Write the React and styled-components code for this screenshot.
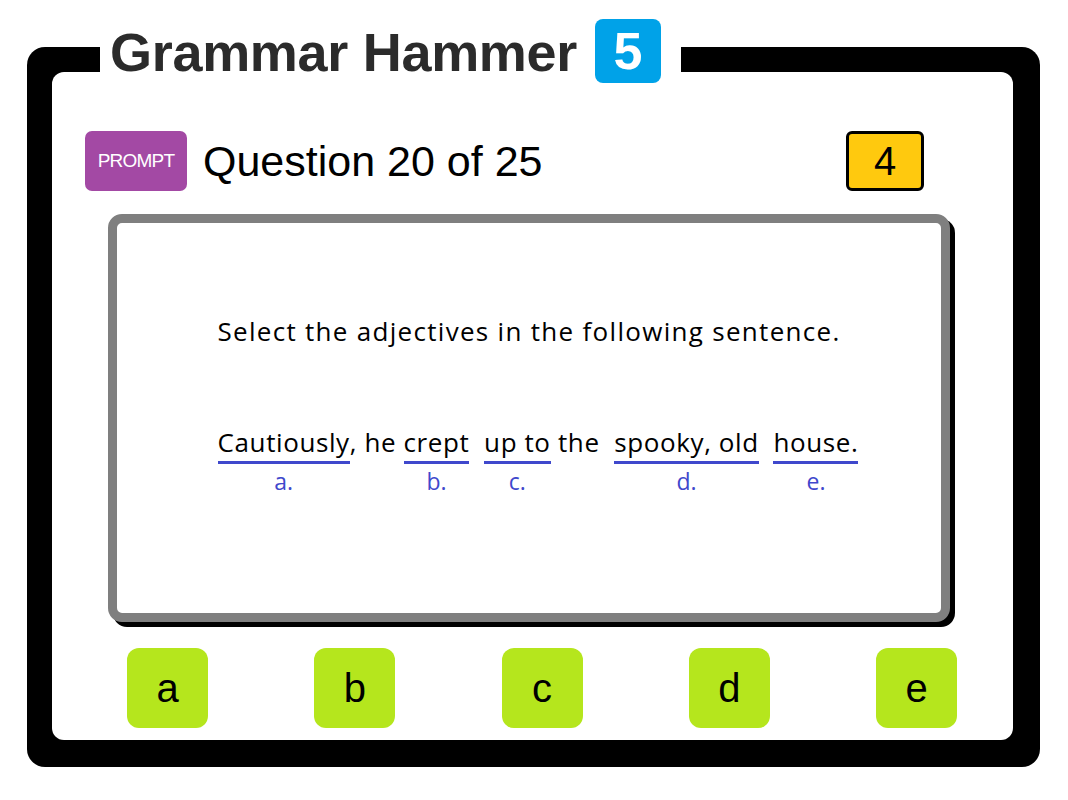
import React from "react";
import styled, { createGlobalStyle } from "styled-components";

const GlobalStyle = createGlobalStyle`
  html, body {
    margin: 0;
    padding: 0;
    background: #ffffff;
  }
  body {
    font-family: "Liberation Sans", Arial, sans-serif;
  }
`;

const Page = styled.div`
  width: 1068px;
  height: 800px;
  padding: 47px 0 0 27px;
  box-sizing: border-box;
`;

const Frame = styled.div`
  width: 1013px;
  height: 720px;
  box-sizing: border-box;
  background: #000;
  border-radius: 18px;
  padding: 25px 27px 27px 25px;
  display: flex;
  flex-direction: column;
`;

const Title = styled.div`
  position: relative;
  z-index: 1;
  align-self: flex-start;
  display: flex;
  align-items: center;
  gap: 18px;
  height: 64px;
  margin: -53px 0 -11px 48px;
  padding: 0 20px 0 10px;
  background: #fff;
`;

const TitleText = styled.h1`
  margin: 0;
  font-family: "Liberation Sans", Arial, sans-serif;
  font-weight: 700;
  font-size: 54px;
  color: #2b2b2b;
  letter-spacing: -0.3px;
  line-height: 1;
  margin-top: 2px;
`;

const LevelBadge = styled.span`
  width: 66px;
  height: 64px;
  border-radius: 8px;
  background: #00a2e8;
  color: #fff;
  font-weight: 700;
  font-size: 52px;
  display: flex;
  align-items: center;
  justify-content: center;
`;

const Panel = styled.div`
  flex: 1;
  background: #fff;
  border-radius: 12px;
  padding-top: 59px;
  display: flex;
  flex-direction: column;
`;

const Header = styled.div`
  display: flex;
  align-items: center;
  justify-content: space-between;
  padding: 0 89px 0 33px;
  height: 60px;
`;

const HeaderLeft = styled.div`
  display: flex;
  align-items: center;
  gap: 16px;
`;

const PromptButton = styled.button`
  width: 102px;
  height: 60px;
  border: none;
  border-radius: 7px;
  background: #a349a4;
  color: #fff;
  font-family: "Liberation Sans", Arial, sans-serif;
  font-size: 19px;
  padding: 0;
  letter-spacing: -0.8px;
`;

const Counter = styled.div`
  font-size: 43px;
  color: #000;
  line-height: 1;
`;

const Score = styled.div`
  width: 78px;
  height: 60px;
  box-sizing: border-box;
  background: #ffc90e;
  border: 3px solid #000;
  border-radius: 6px;
  display: flex;
  align-items: center;
  justify-content: center;
  font-size: 40px;
  color: #000;
`;

const Card = styled.div`
  margin: 23px 63px 0 56px;
  height: 408px;
  box-sizing: border-box;
  border: 9px solid #7f7f7f;
  border-radius: 14px;
  box-shadow: 5px 5px 0 #000;
  background: #fff;
  display: flex;
  flex-direction: column;
  align-items: center;
  padding-top: 91px;
  font-family: "Comic Sans MS", "Open Sans", sans-serif;
  color: #000;
`;

const Instruction = styled.div`
  font-size: 26px;
  line-height: 34px;
  letter-spacing: 1.3px;
`;

const Sentence = styled.div`
  margin-top: 77px;
  display: flex;
  align-items: flex-start;
  font-size: 26px;
  line-height: 34px;
  letter-spacing: 0.6px;
  margin-left: 18px;
`;

const Plain = styled.span`
  white-space: pre;
`;

const Choice = styled.span`
  display: flex;
  flex-direction: column;
  align-items: stretch;
`;

const Word = styled.span`
  white-space: pre;
  border-bottom: 3px solid #3f48cc;
  padding-bottom: 2px;
`;

const Label = styled.span`
  text-align: center;
  color: #3f48cc;
  font-size: 23px;
  line-height: 34px;
  letter-spacing: 0;
`;

const Answers = styled.div`
  margin-top: 26px;
  display: flex;
  justify-content: space-between;
  padding: 0 56px 0 75px;
`;

const AnswerButton = styled.button`
  width: 81px;
  height: 80px;
  border: none;
  border-radius: 12px;
  background: #b5e61d;
  color: #000;
  font-family: "Liberation Sans", Arial, sans-serif;
  font-size: 40px;
  padding: 0;
`;

const parts = [
  { word: "Cautiously", label: "a." },
  { text: ", he " },
  { word: "crept", label: "b." },
  { text: "  " },
  { word: "up to", label: "c." },
  { text: " the  " },
  { word: "spooky, old", label: "d." },
  { text: "  " },
  { word: "house.", label: "e." },
];

const App = () => {
  return (
    <Page>
      <GlobalStyle />
      <Frame>
        <Title>
          <TitleText>Grammar Hammer</TitleText>
          <LevelBadge>5</LevelBadge>
        </Title>
        <Panel>
          <Header>
            <HeaderLeft>
              <PromptButton>PROMPT</PromptButton>
              <Counter>Question 20 of 25</Counter>
            </HeaderLeft>
            <Score>4</Score>
          </Header>
          <Card>
            <Instruction>Select the adjectives in the following sentence.</Instruction>
            <Sentence>
              {parts.map((p, i) =>
                p.word ? (
                  <Choice key={i}>
                    <Word>{p.word}</Word>
                    <Label>{p.label}</Label>
                  </Choice>
                ) : (
                  <Plain key={i}>{p.text}</Plain>
                )
              )}
            </Sentence>
          </Card>
          <Answers>
            {["a", "b", "c", "d", "e"].map((l) => (
              <AnswerButton key={l}>{l}</AnswerButton>
            ))}
          </Answers>
        </Panel>
      </Frame>
    </Page>
  );
};

export default App;
